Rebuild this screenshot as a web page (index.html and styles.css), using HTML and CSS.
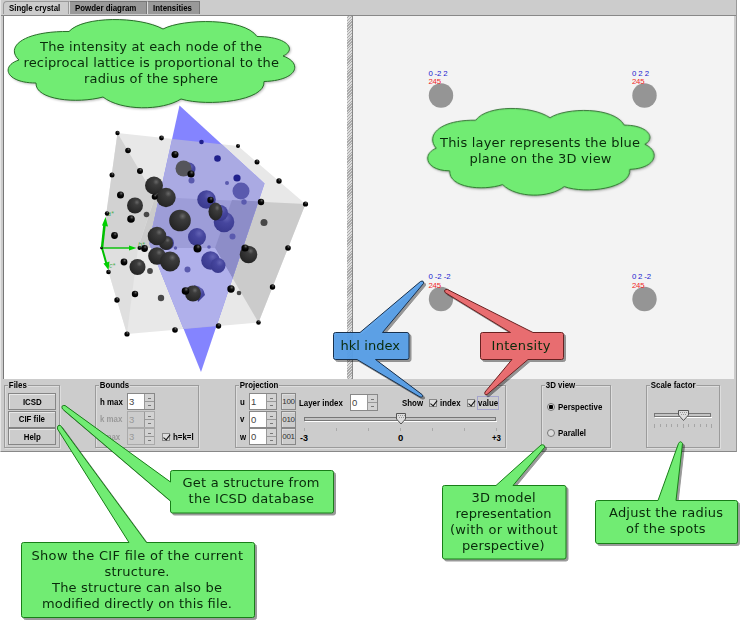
FILE: index.html
```
<!DOCTYPE html>
<html lang="en">
<head>
<meta charset="utf-8">
<title>Reciprocal lattice viewer</title>
<link rel="stylesheet" href="styles.css">
</head>
<body>
<div class="app">
  <nav class="tabs">
    <div class="tab active"><span class="t">Single crystal</span></div>
    <div class="tab powder"><span class="t">Powder diagram</span></div>
    <div class="tab inten"><span class="t">Intensities</span></div>
  </nav>
  <main class="views">
    <svg class="crystal" viewBox="4 16 343 363">
      <defs>
        <radialGradient id="dark" cx=".62" cy=".3" r=".7"><stop offset="0" stop-color="#686868"/><stop offset=".25" stop-color="#3c3c3c"/><stop offset="1" stop-color="#242424"/></radialGradient>
        <radialGradient id="blue" cx=".62" cy=".3" r=".75"><stop offset="0" stop-color="#6262b4"/><stop offset=".35" stop-color="#46469e"/><stop offset="1" stop-color="#38388c"/></radialGradient>
        <radialGradient id="mini" cx=".6" cy=".28" r=".5"><stop offset="0" stop-color="#666"/><stop offset=".5" stop-color="#111"/><stop offset="1" stop-color="#000"/></radialGradient>
        <clipPath id="plane"><path d="M179.500 105.500L264.500 183.500 201 372 149 243Z"/></clipPath>
      </defs>
      <path fill="#e8e8e8" d="M117.500 133L238 146 305.500 204 258.500 322.500 127 334 101.500 248Z"/>
      <path fill="#d2d2d2" d="M117.500 133L155 197 138 248H101.500Z"/>
      <path fill="#cbcbcb" d="M155 197L305.500 204 258.500 322.500 215 248H138Z"/>
      <path fill="#dfdfdf" d="M101.500 248H138L127 334Z"/>
      <path fill="#8484ff" d="M179.500 105.500L264.500 183.500 201 372 149 243Z"/>
      <g clip-path="url(#plane)">
        <path fill="#aaaae3" d="M117.500 133L238 146 305.500 204 258.500 322.500 127 334 101.500 248Z"/>
        <path fill="#9d9dd8" d="M155 197L305.500 204 258.500 322.500 215 248H138Z"/>
        <path fill="#8d8dc8" d="M232 200L305 204 258 322 215 248Z"/>
        <path fill="#b0b0eb" d="M138 248H215L258 322 127 334Z"/>
      </g>
      <g fill="url(#blue)">
        <circle cx="206.500" cy="199.500" r="9.300"/><circle cx="224" cy="222" r="10.300"/><circle cx="220" cy="213" r="8"/>
        <circle cx="189" cy="169" r="6.500"/><circle cx="197" cy="237" r="9"/><circle cx="167" cy="243" r="7"/>
        <circle cx="210.500" cy="260.500" r="9.300"/><circle cx="218" cy="265.500" r="7.500"/><path d="M194 285Q204 287 205 295L198 302Z"/>
      </g>
      <g fill="#5a5aae">
        <circle cx="241" cy="191" r="8.500"/><circle cx="244" cy="202" r="2.700"/><circle cx="227" cy="183" r="2"/>
        <circle cx="191.500" cy="180.500" r="3"/><circle cx="209" cy="247" r="1.800"/><circle cx="232.500" cy="236.500" r="3"/>
        <circle cx="187.500" cy="269.500" r="3"/><circle cx="175.500" cy="248" r="1.700"/>
      </g>
      <g fill="#20208c"><circle cx="201.500" cy="142" r="2.300"/><circle cx="217.500" cy="158.500" r="3.300"/><circle cx="237" cy="178" r="3.600"/></g>
      <circle cx="183.500" cy="168.500" r="8" fill="#55555b"/>
      <g fill="url(#dark)">
        <circle cx="154" cy="185.500" r="9"/><circle cx="166" cy="197.500" r="9.700"/><circle cx="135" cy="205.500" r="8"/>
        <circle cx="180" cy="220.500" r="10.800"/><circle cx="166" cy="243" r="7"/><circle cx="157" cy="236" r="9.300"/><circle cx="157" cy="256" r="8.800"/>
        <circle cx="170" cy="261.500" r="10"/><circle cx="137.500" cy="267" r="8"/><circle cx="193" cy="293.500" r="8"/><circle cx="248.500" cy="254.500" r="8.800"/>
        <ellipse cx="215.500" cy="211.500" rx="7" ry="9"/>
      </g>
      <g fill="#484848"><circle cx="146.500" cy="214.500" r="2.800"/><circle cx="264" cy="222.500" r="3.500"/><circle cx="150" cy="271" r="2.900"/><circle cx="161" cy="298" r="3.200"/><circle cx="239" cy="293" r="2.300"/></g>
      <g stroke="#00c000" fill="none">
        <path stroke-width="2.500" d="M102 248L104.500 225"/><path stroke-width="1.400" d="M102 248H131"/><path stroke-width="2" d="M102 248L106.500 264"/>
      </g>
      <g fill="#00d000"><path d="M105.500 217L108 226.500 102 225.500Z"/><path d="M136.500 248L129 245.500V250.500Z"/><path d="M108.500 270L109.500 261.500 103.500 263.500Z"/></g>
      <g class="axis"><text x="107" y="216">a*</text><text x="138" y="247">b*</text><text x="109" y="268">c*</text></g>
      <g fill="url(#mini)">
        <circle cx="117.500" cy="133" r="2.200"/><circle cx="161.500" cy="138" r="2.400"/><circle cx="128" cy="150.500" r="2.800"/><circle cx="112" cy="175" r="2.500"/><circle cx="140" cy="171" r="3"/>
        <circle cx="175" cy="154.500" r="3.500"/><circle cx="154.700" cy="196.700" r="3"/><circle cx="120.500" cy="195" r="3.500"/><circle cx="131" cy="219" r="3.800"/><circle cx="107" cy="213.500" r="2.200"/>
        <circle cx="114.500" cy="235.500" r="3.400"/><circle cx="101.500" cy="248" r="1.300"/><circle cx="191" cy="174" r="3.600"/><circle cx="238" cy="146" r="2"/><circle cx="257" cy="162" r="2.500"/>
        <circle cx="279" cy="181" r="2.700"/><circle cx="305.500" cy="204" r="2.600"/><circle cx="261" cy="202" r="3.200"/><circle cx="288" cy="248" r="2.800"/><circle cx="272.500" cy="287" r="2.700"/>
        <circle cx="258.500" cy="322.500" r="2.300"/><circle cx="218.500" cy="326" r="2.700"/><circle cx="231" cy="289" r="3.700"/><circle cx="245" cy="248" r="3.600"/><circle cx="197.500" cy="248.500" r="4"/>
        <circle cx="144.500" cy="248.500" r="3.400"/><circle cx="139.500" cy="248" r="2"/><circle cx="124" cy="262" r="3.400"/><circle cx="108.500" cy="272" r="2.300"/><circle cx="117" cy="300" r="2.700"/>
        <circle cx="135" cy="294" r="3.200"/><circle cx="127" cy="334" r="2.600"/><circle cx="175" cy="330" r="2.800"/><circle cx="185.500" cy="291" r="3.800"/><circle cx="210.500" cy="200" r="3.200"/>
      </g>
    </svg>
    <div class="divider"></div>
    <svg class="layer" viewBox="353 16 381 363">
      <g fill="#959595"><circle cx="441" cy="95.500" r="12.200"/><circle cx="644.500" cy="95.500" r="12.200"/><circle cx="441" cy="299" r="12.200"/><circle cx="644.500" cy="299" r="12.200"/></g>
      <g class="hkl"><text x="428.500" y="75.700" textLength="19">0 -2 2</text><text x="632" y="75.700" textLength="17">0 2 2</text><text x="428.500" y="279.200" textLength="22">0 -2 -2</text><text x="632" y="279.200" textLength="19">0 2 -2</text></g>
      <g class="val"><text x="428.500" y="84" textLength="12.500">245</text><text x="632" y="84" textLength="12.500">245</text><text x="428.500" y="287.500" textLength="12.500">245</text><text x="632" y="287.500" textLength="12.500">245</text></g>
    </svg>
  </main>
  <section class="controls">
    <div class="group files"><span class="legend t">Files</span>
      <div class="btn"><span class="t">ICSD</span></div><div class="btn"><span class="t">CIF file</span></div><div class="btn"><span class="t">Help</span></div>
    </div>
    <div class="group bounds"><span class="legend t">Bounds</span>
      <div class="brow"><span class="t">h max</span><div class="spin"><b>3</b><i></i></div></div>
      <div class="brow off"><span class="t">k max</span><div class="spin"><b>3</b><i></i></div></div>
      <div class="brow off"><span class="t">l max</span><div class="spin"><b>3</b><i></i></div><div class="check on"></div><span class="t live">h=k=l</span></div>
    </div>
    <div class="group proj"><span class="legend t">Projection</span>
      <div class="vectors">
        <div class="vrow"><span class="t">u</span><div class="spin"><b>1</b><i></i></div><div class="dir">100</div></div>
        <div class="vrow"><span class="t">v</span><div class="spin"><b>0</b><i></i></div><div class="dir">010</div></div>
        <div class="vrow"><span class="t">w</span><div class="spin"><b>0</b><i></i></div><div class="dir">001</div></div>
      </div>
      <div class="panel">
        <div class="opts">
          <span class="t layerlbl">Layer index</span><div class="spin"><b>0</b><i></i></div>
          <span class="t show">Show</span><div class="check on"></div><span class="t idx">index</span><div class="check on"></div><div class="focus"><span class="t">value</span></div>
        </div>
        <svg class="slider" viewBox="299 412 205 34">
          <rect x="304.500" y="417.500" width="191" height="3" fill="#c4c4c4" stroke="#777"/><path stroke="#fff" d="M305 421.500H497"/>
          <path stroke="#aaa" d="M304.500 428v3M336.500 428v3M368.500 428v3M400.500 428v3M432.500 428v3M464.500 428v3M496.500 428v3"/>
          <path fill="#ddd" stroke="#555" d="M396.500 413.500H405.500V419L401 424 396.500 419Z"/>
          <path stroke="#999" stroke-dasharray="1 1" d="M398 415.500H405M399 417.500H404"/>
          <g class="ticktext"><text x="300" y="440.500" textLength="8" lengthAdjust="spacingAndGlyphs">-3</text><text x="398" y="440.500">0</text><text x="492" y="440.500" textLength="9" lengthAdjust="spacingAndGlyphs">+3</text></g>
        </svg>
      </div>
    </div>
    <div class="group mode"><span class="legend t">3D view</span>
      <div class="radio sel"><i></i><span class="t">Perspective</span></div>
      <div class="radio"><i></i><span class="t">Parallel</span></div>
    </div>
    <div class="group scale"><span class="legend t">Scale factor</span>
      <svg class="mini" viewBox="647 386 73 62">
        <rect x="654.500" y="413.500" width="56" height="3" fill="#c4c4c4" stroke="#777"/><path stroke="#fff" d="M655 417.500H712"/>
        <path stroke="#a5a5a5" d="M654.500 424v4M660.500 424v3M666.500 424v3M671.500 424v3M677.500 424v3M683.500 424v4M688.500 424v3M694.500 424v3M700.500 424v3M706.500 424v3M711.500 424v4"/>
        <path fill="#ddd" stroke="#555" d="M678.500 410.500H688.500V415L683.500 420.500 678.500 415Z"/><path stroke="#999" stroke-dasharray="1 1" d="M680 412.500H688M681 414.500H686"/>
      </svg>
    </div>
  </section>
</div>

<svg class="notes" viewBox="0 0 741 621">
  <defs><path id="cloud" vector-effect="non-scaling-stroke" d="M69 31.500C83 16 139 16 163 29C183 18.500 244 17.500 257 36.500C288 36.500 297 50 283 56C303 63 298 80.500 264 81.500C266 101 208 107 181 99C162 111 121 111 103 97C77 104 35 100 36 83C6 83 0 66 19 60C5 47 23 31 69 31.500Z"/></defs>
  <g class="cloud"><use href="#cloud"/><use href="#cloud" transform="translate(421.180 89.320) scale(.79 .983)"/></g>
  <g class="green">
    <path d="M172.500 470.500H331.500Q333.500 470.500 333.500 472.500V511Q333.500 513 331.500 513H172.500Q170.500 513 170.500 511V501L62.500 409Q60.500 405 65 405.500L170.500 482V472.500Q170.500 470.500 172.500 470.500Z"/>
    <path d="M23.500 542.500H129L57.500 429Q57 424.500 60.500 425.500L146.500 542.500H252.500Q254.500 542.500 254.500 544.500V615.500Q254.500 617.500 252.500 617.500H23.500Q21.500 617.500 21.500 615.500V544.500Q21.500 542.500 23.500 542.500Z"/>
    <path d="M444.500 485.500H496L541 445Q545 444 544.500 447.500L513 485.500H564Q566 485.500 566 487.500V557Q566 559 564 559H444.500Q442.500 559 442.500 557V487.500Q442.500 485.500 444.500 485.500Z"/>
    <path d="M597.500 500.500H658L678.500 443.500Q680.500 440 682.500 443.500L676 500.500H735.500Q737.500 500.500 737.500 502.500V541Q737.500 543.500 735.500 543.500H597.500Q595.500 543.500 595.500 541V502.500Q595.500 500.500 597.500 500.500Z"/>
  </g>
  <path class="bluebox" d="M335.500 332.500H360L420.500 281.500Q424 280 423.500 283.500L382.500 332.500H407Q409 332.500 409 334.500V357.500Q409 359.500 407 359.500H375.500L422 394.500Q424 397.500 420 397L357 359.500H335.500Q333.500 359.500 333.500 357.500V334.500Q333.500 332.500 335.500 332.500Z"/>
  <path class="redbox" d="M482.500 332.500H510.500L445 292.500Q443.500 289 447.500 289.500L533 332.500H561.500Q563.500 332.500 563.500 334.500V357.500Q563.500 359.500 561.500 359.500H528L487 394.500Q484 395.500 485 392L512 359.500H482.500Q480.500 359.500 480.500 357.500V334.500Q480.500 332.500 482.500 332.500Z"/>
  <g class="words">
    <text x="40" y="51" textLength="222">The intensity at each node of the</text><text x="23.500" y="67" textLength="255.500">reciprocal lattice is proportional to the</text><text x="84" y="83" textLength="134">radius of the sphere</text>
    <text x="440" y="147" textLength="200">This layer represents the blue</text><text x="469.500" y="163" textLength="142">plane on the 3D view</text>
    <text x="182.500" y="487" textLength="137">Get a structure from</text><text x="188.500" y="503" textLength="125.500">the ICSD database</text>
    <text x="31.500" y="560" textLength="211.500">Show the CIF file of the current</text><text x="104.500" y="576" textLength="65">structure.</text><text x="52" y="592" textLength="170">The structure can also be</text><text x="42" y="608" textLength="190">modified directly on this file.</text>
    <text x="471.500" y="502" textLength="64">3D model</text><text x="455.500" y="518" textLength="96">representation</text><text x="450" y="534" textLength="107.500">(with or without</text><text x="462" y="550" textLength="82.500">perspective)</text>
    <text x="609" y="517" textLength="114">Adjust the radius</text><text x="626" y="533" textLength="79.500">of the spots</text>
    <text x="340.500" y="350" textLength="59.500">hkl index</text><text x="491.500" y="350" textLength="59">Intensity</text>
  </g>
</svg>
</body>
</html>
```
FILE: styles.css
```
* { box-sizing: border-box; }
body { margin: 0; width: 741px; height: 621px; overflow: hidden; position: relative; background: #fff; font-family: "Liberation Sans", sans-serif; color: #000; }
svg { display: block; flex: none; }

.app { width: 737px; height: 452px; background: #ccc; border-right: 1px solid #999; border-bottom: 1px solid #888; border-left: 1px solid #e6e6e6; display: flex; flex-direction: column; }
.t { display: inline-block; font: bold 9.5px/12px "Liberation Sans", sans-serif; transform: scaleX(.83); transform-origin: left center; white-space: nowrap; }

.tabs { display: flex; height: 15px; padding: 1px 0 1px 2px; align-items: stretch; flex: none; }
.tab { display: flex; align-items: center; background: #999; border: 1px solid #777; border-left-color: #ddd; border-bottom: 0; padding: 0 0 0 5px; }
.tab.active { width: 66px; background: #ccc; border-color: #999; border-top-left-radius: 4px; }
.tab.powder { width: 78px; }
.tab.inten { width: 53px; }

.views { display: flex; height: 364px; padding: 0 0 0 3px; border-top: 1px solid #888; flex: none; background: linear-gradient(90deg, #ccc 2px, #777 2px, #777 3px, #ccc 3px); }
.crystal { width: 343px; height: 363px; background: #fff; }
.divider { width: 6px; border-right: 1px solid #888; background: repeating-linear-gradient(135deg, #ddd 0, #ddd 1px, #aaa 1px, #aaa 2px); }
.layer { width: 381px; height: 363px; background: #f3f3f3; }
.axis text { font: italic 7px "Liberation Sans", sans-serif; fill: #4fae4f; }
.hkl text { font: 7.8px "Liberation Sans", sans-serif; fill: #1818cf; }
.val text { font: 7.8px "Liberation Sans", sans-serif; fill: #f02828; }

.controls { display: flex; padding: 6px 0 0 3px; height: 72px; }
.group { position: relative; height: 63px; border: 1px solid #9b9b9b; box-shadow: 1px 1px 0 #ddd, inset 1px 1px 0 #ddd; flex: none; }
.legend { position: absolute; top: -7px; left: 3px; padding: 0 1px; background: #ccc; }
.files { width: 56px; margin-right: 35px; padding: 7px 3px 0; }
.btn { height: 17px; margin-bottom: .5px; border: 1px solid #858585; box-shadow: inset 1px 1px 0 #e8e8e8; display: flex; align-items: center; justify-content: center; }
.btn .t { transform-origin: center; }

.bounds { width: 104px; margin-right: 36px; padding: 7px 0 0 4px; }
.brow, .vrow { display: flex; align-items: center; height: 17.5px; }
.brow > .t:first-child { width: 27px; }
.brow.off { color: #999; }
.brow .check { margin: 0 3px 0 7px; }
.brow .live { color: #000; }
.spin { display: flex; width: 28px; height: 17px; border: 1px solid #888; flex: none; }
.spin b { width: 17px; background: #fff; font: 9.5px/15px "Liberation Sans", sans-serif; padding-left: 1px; color: #444; }
.off .spin b { background: #ccc; color: #999; }
.off .spin { border-color: #aaa; }
.spin i { width: 10px; border-left: 1px solid #999; background: linear-gradient(#999, #999) 0 7px / 100% 1px no-repeat, linear-gradient(#777, #777) 3px 4px / 3px 1px no-repeat, linear-gradient(#777, #777) 3px 11px / 3px 1px no-repeat, #d2d2d2; }
.check { width: 8px; height: 8px; border: 1px solid #888; background: #ddd; position: relative; flex: none; }
.check::after { content: ""; position: absolute; left: 1.5px; top: -1px; width: 3px; height: 5.5px; border: solid #111; border-width: 0 1.5px 1.5px 0; transform: rotate(38deg); }

.proj { width: 271px; margin-right: 35px; padding: 7px 0 0 4px; display: flex; }
.vectors { width: 59px; }
.vrow > .t { width: 9px; }
.dir { width: 15px; height: 17px; margin-left: 4px; border: 1px solid #888; box-shadow: inset 1px 1px 0 #ddd; font: 8px/15px "Liberation Sans", sans-serif; letter-spacing: -.3px; text-align: center; color: #333; }
.panel { width: 205px; }
.opts { display: flex; align-items: center; height: 19px; }
.layerlbl { width: 51px; flex: none; }
.show { width: 27px; margin-left: 24px; flex: none; }
.idx { width: 27px; margin-left: 3px; flex: none; }
.focus { width: 22px; height: 14px; margin-left: 2px; border: 1px solid #a4a4cc; flex: none; }
.focus .t { display: block; }
.slider { width: 205px; height: 34px; }
.ticktext text { font: bold 9.5px "Liberation Sans", sans-serif; }

.mode { width: 70px; margin-right: 35px; padding: 14px 0 0 5px; }
.radio { display: flex; align-items: center; height: 14px; margin-bottom: 12px; }
.radio i { width: 8px; height: 8px; border: 1px solid #777; border-radius: 50%; margin-right: 3px; background: #ddd; flex: none; }
.radio.sel i { background: radial-gradient(circle, #000 0, #000 2px, #ddd 2.5px); }
.scale { width: 74px; }
.mini { width: 73px; height: 62px; }

.notes { position: absolute; left: 0; top: 0; width: 741px; height: 621px; pointer-events: none; }
.cloud { fill: #71ec73; stroke: #286e28; stroke-width: 1; filter: drop-shadow(1px 1px 1px #0004); }
.green { fill: #71ec73; stroke: #187e18; stroke-width: 1; filter: drop-shadow(2px 2px .7px #0006); }
.bluebox { fill: #58a0e9; fill-opacity: .95; stroke: #18304c; filter: drop-shadow(2px 2px .7px #0006); }
.redbox { fill: #ea6c6f; fill-opacity: .98; stroke: #682020; filter: drop-shadow(2px 2px .7px #0006); }
.words text { font: 13px "DejaVu Sans", sans-serif; fill: #092b0b; }
```
